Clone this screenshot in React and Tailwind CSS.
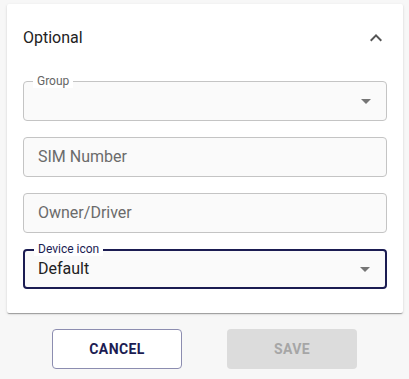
import React from "react";

const font = { fontFamily: "Roboto, 'Liberation Sans', sans-serif" };

function Arrow() {
  return (
    <svg width="24" height="24" viewBox="0 0 24 24" className="absolute right-[8px] top-1/2 -translate-y-1/2">
      <path d="M7 10l5 5 5-5z" fill="#757575" />
    </svg>
  );
}

function Field({ label, placeholder, value, select, focused }) {
  return (
    <div
      className={`relative h-[40px] rounded-[4px] bg-[#fafafa] ${
        focused ? "border-2 border-[#1b1c52]" : "border border-[#c4c4c4]"
      }`}
    >
      {label && (
        <span
          className={`absolute left-[9px] ${focused ? "-top-[9px]" : "-top-[8px]"} bg-white px-[4px] text-[12px] leading-[14px] ${
            focused ? "text-[#1b1c52]" : "text-[#666666]"
          }`}
        >
          {label}
        </span>
      )}
      <div className={`flex h-full items-center ${focused ? "pl-[13px]" : "pl-[14px]"} text-[16px]`}>
        {placeholder && <span className="text-[#6b6b6b]">{placeholder}</span>}
        {value && <span className="text-[#222222]">{value}</span>}
      </div>
      {select && <Arrow />}
    </div>
  );
}

export default function App() {
  return (
    <div className="min-h-[379px] w-[409px] bg-[#f7f7f7] pt-[4px]" style={font}>
      <div className="mx-[6px] ml-[7px] rounded-[2px] bg-white shadow-[0_2px_1px_-1px_rgba(0,0,0,0.2),0_1px_1px_0_rgba(0,0,0,0.14),0_1px_3px_0_rgba(0,0,0,0.12)]">
        <div className="flex h-[68px] items-center justify-between pl-[16px] pr-[16px]">
          <span className="text-[16px] text-[#222222]">Optional</span>
          <svg width="24" height="24" viewBox="0 0 24 24" className="mr-[-1px]">
            <path d="M12 8l-6 6 1.41 1.41L12 10.83l4.59 4.58L18 14z" fill="#555555" />
          </svg>
        </div>
        <div className="flex flex-col gap-[16px] px-[16px] pt-[9px] pb-[24px]">
          <Field label="Group" select />
          <Field placeholder="SIM Number" />
          <Field placeholder="Owner/Driver" />
          <Field label="Device icon" value="Default" select focused />
        </div>
      </div>
      <div className="mt-[16px] flex justify-center gap-[45px]">
        <button className="h-[40px] w-[130px] rounded-[4px] border border-[#8c8db0] bg-white text-[14px] font-bold tracking-[0.4px] text-[#1b1c52]">
          CANCEL
        </button>
        <button className="h-[40px] w-[130px] rounded-[4px] bg-[#dcdcdc] text-[14px] font-bold tracking-[0.4px] text-[#a6a6a6]">
          SAVE
        </button>
      </div>
    </div>
  );
}
